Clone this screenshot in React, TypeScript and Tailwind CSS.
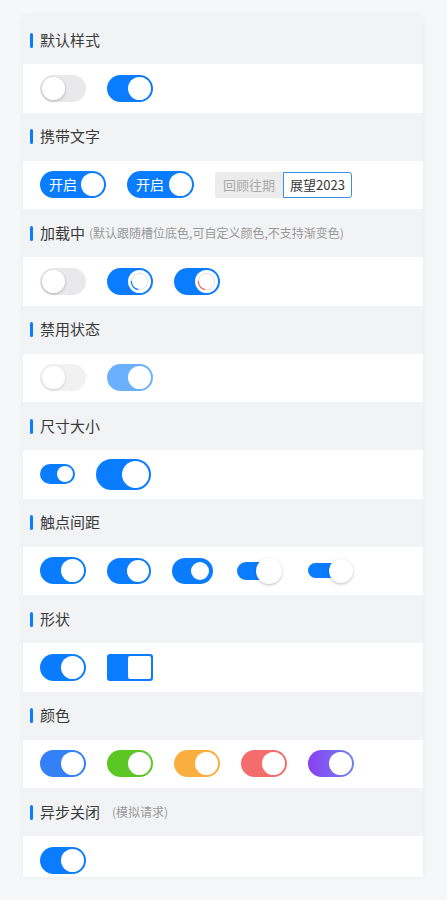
import React from "react";

const BLUE = "#0a7cff";

interface KnobProps {
  size: number;
  square?: boolean;
  spinner?: string;
  shadow?: boolean;
}

// white knob, optionally with a loading ring
const Knob: React.FC<KnobProps> = ({ size, square = false, spinner, shadow = false }) => (
  <div
    className={`flex shrink-0 items-center justify-center bg-white ${square ? "rounded-[2px]" : "rounded-full"} ${
      shadow ? "shadow-[0_1px_3px_rgba(0,0,0,0.25)]" : ""
    }`}
    style={{ width: size, height: size }}
  >
    {spinner && (
      <svg width={size} height={size} viewBox="0 0 24 24" fill="none">
        <circle cx="12" cy="12" r="8.5" stroke="#dcdfe6" strokeWidth="1" />
        <path d="M 3.5 12 A 8.5 8.5 0 0 0 10 20.3" stroke={spinner} strokeWidth="1.4" strokeLinecap="round" />
      </svg>
    )}
  </div>
);

interface SwitchProps {
  on?: boolean;
  w?: number;
  h?: number;
  knob?: number;
  pad?: number;
  bg?: string;
  square?: boolean;
  spinner?: string;
  text?: string;
  faded?: boolean;
}

const Switch: React.FC<SwitchProps> = ({
  on = true,
  w = 46,
  h = 27,
  knob = 23,
  pad = 2,
  bg = BLUE,
  square = false,
  spinner,
  text,
  faded = false,
}) => (
  <div
    className={`flex shrink-0 items-center ${on ? "justify-end" : "justify-start"} ${square ? "rounded-[3px]" : "rounded-full"} ${
      faded ? "opacity-60" : ""
    }`}
    style={{ width: w, height: h, padding: pad, background: on ? bg : "#e9e9eb" }}
  >
    {text && <span className="mr-auto pl-[7px] text-[14px] text-white">{text}</span>}
    <Knob size={knob} square={square} spinner={spinner} shadow={!on} />
  </div>
);

// track narrower than the knob that hangs over its end
const OverSwitch: React.FC<{ w: number; track: number; th: number; knob: number }> = ({ w, track, th, knob }) => (
  <div className="relative flex shrink-0 items-center" style={{ width: w, height: knob }}>
    <div className="rounded-l-full rounded-r-full" style={{ width: track, height: th, background: BLUE }} />
    <div className="absolute right-0 top-0">
      <Knob size={knob} shadow />
    </div>
  </div>
);

const Title: React.FC<{ title: string; sub?: string; subGap?: boolean }> = ({ title, sub, subGap }) => (
  <div className="flex h-12 items-center pl-[7px]">
    <div className="h-[15px] w-[3px] rounded-sm bg-[#0a7cff]" />
    <span className="ml-[7px] text-[15px] text-[#3a3a3a]">{title}</span>
    {sub && <span className={`${subGap ? "ml-3" : "ml-1"} text-[12px] text-[#999]`}>{sub}</span>}
  </div>
);

const Row: React.FC<{ children: React.ReactNode; last?: boolean }> = ({ children, last }) => (
  <div
    className={`flex gap-[21px] bg-white px-[17px] ${last ? "h-[41px] items-start pt-[11px]" : "h-[48.5px] items-center"}`}
  >
    {children}
  </div>
);

export default function App() {
  return (
    <div
      className="min-h-[900px] bg-[#f6f7f8] pt-[16px]"
      style={{ fontFamily: '"Noto Sans CJK SC", "Noto Sans", sans-serif' }}
    >
      <div className="ml-[23px] w-[400px] bg-[#f2f3f5] shadow-[0_0_6px_rgba(0,0,0,0.06)]">
        <Title title="默认样式" />
        <Row>
          <Switch on={false} />
          <Switch />
        </Row>

        <Title title="携带文字" />
        <Row>
          <Switch w={66} text="开启" />
          <Switch w={67} text="开启" />
          <div className="flex h-[26px] text-[13px]">
            <div className="flex items-center rounded-l-[2px] bg-[#ececec] px-[8px] text-[#aaa]">回顾往期</div>
            <div className="flex items-center rounded-r-[3px] border border-[#3a8ee6] px-[6px] text-[#333]">展望2023</div>
          </div>
        </Row>

        <Title title="加载中" sub="(默认跟随槽位底色,可自定义颜色,不支持渐变色)" />
        <Row>
          <Switch on={false} />
          <Switch spinner={BLUE} />
          <Switch spinner="#f56c6c" />
        </Row>

        <Title title="禁用状态" />
        <Row>
          <Switch on={false} faded />
          <Switch faded />
        </Row>

        <Title title="尺寸大小" />
        <Row>
          <Switch w={35} h={20} knob={16} />
          <Switch w={55} h={31} knob={27} />
        </Row>

        <Title title="触点间距" />
        <Row>
          <Switch />
          <Switch w={44} h={26} knob={22} />
          <Switch w={41} h={26} knob={18} pad={4} />
          <div className="ml-[3px]">
            <OverSwitch w={45} track={34} th={18} knob={26} />
          </div>
          <div className="ml-[5px]">
            <OverSwitch w={45} track={30} th={15} knob={24} />
          </div>
        </Row>

        <Title title="形状" />
        <Row>
          <Switch />
          <Switch square />
        </Row>

        <Title title="颜色" />
        <Row>
          <Switch bg="#3480f6" />
          <Switch bg="#5ac725" />
          <Switch bg="#f9ae3d" />
          <Switch bg="#f56c6c" />
          <Switch bg="linear-gradient(90deg, #8b3ff0, #6a84f0)" />
        </Row>

        <Title title="异步关闭" sub="(模拟请求)" subGap />
        <Row last>
          <Switch />
        </Row>
      </div>
    </div>
  );
}
